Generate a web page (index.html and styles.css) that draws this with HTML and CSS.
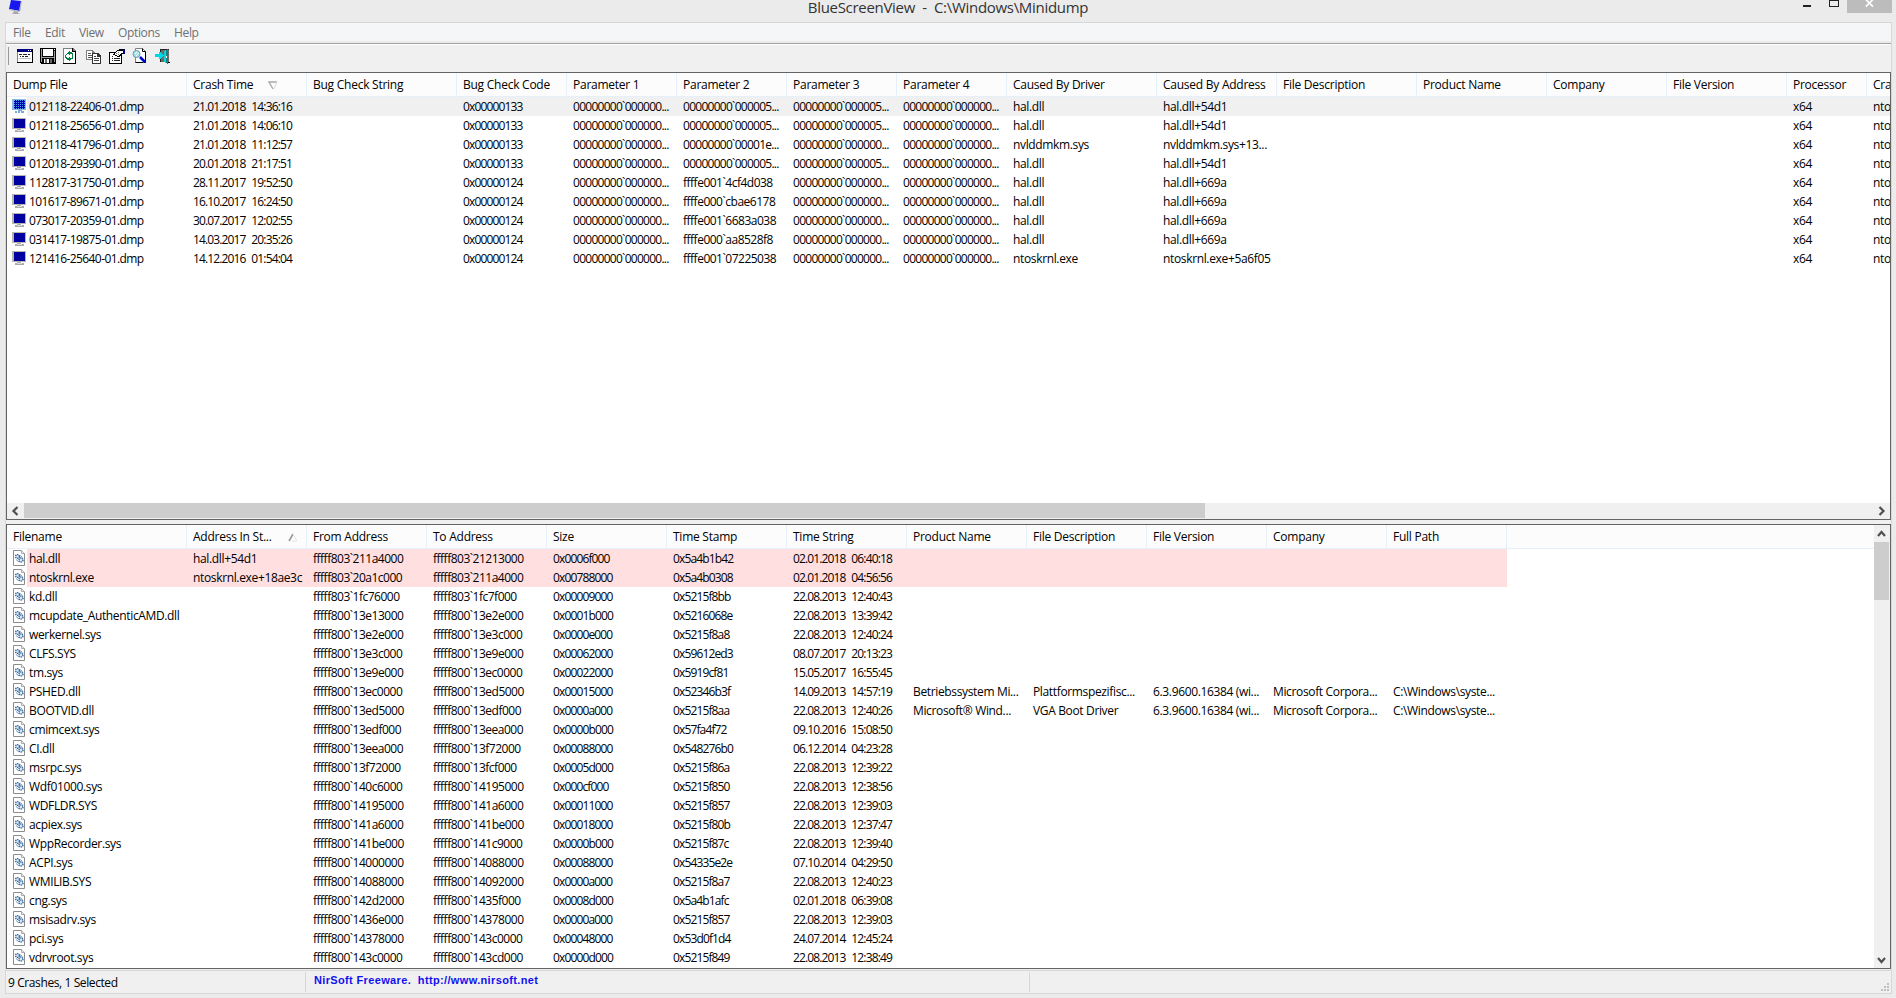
FILE: index.html
```
<!DOCTYPE html>
<html lang="en">
<head>
    <meta charset="UTF-8">
    <meta name="viewport" content="width=device-width, initial-scale=1.0">
    <title>BlueScreenView</title>
    <link rel="stylesheet" href="styles.css">
</head>
<body>
    <!-- shared row icons -->
    <svg class="defs" width="0" height="0">
        <pattern id="dots" width="2" height="2" patternUnits="userSpaceOnUse">
            <rect width="2" height="2" fill="#0000b4"/>
            <rect width="1" height="1" fill="#4b9be8"/>
        </pattern>
        <symbol id="monitor" viewBox="0 0 16 16">
            <path d="M0 1h14v11H0z" fill="#b9b5ad"/>
            <path d="M2 2h11v9H2z" fill="#0000a0"/>
            <path d="M5 12h4v1H5zM3 13h9v2H3z" fill="#aaa"/>
            <path d="M5 13h5v1H5z" fill="#ddd"/>
        </symbol>
        <symbol id="monitor-selected" viewBox="0 0 16 16">
            <path d="M0 1h14v11H0z" fill="#8db9dc"/>
            <path d="M2 2h11v9H2z" fill="url(#dots)"/>
            <path d="M6 12h4v1H6zM3 13h2v2H3zM6 13h2v2H6zM9 13h3v2H9z" fill="#7ba9d0"/>
        </symbol>
        <symbol id="module" viewBox="0 0 16 16">
            <path d="M1.500.5h8l3 3v12h-11z" fill="#fff" stroke="#8c8c8c"/>
            <path d="M9.500.5v3h3" fill="#eee" stroke="#aaa"/>
            <circle cx="5.500" cy="6.500" r="1.900" fill="#dce9f5" stroke="#34689c" stroke-width="1.400" stroke-dasharray="1.300 .6"/>
            <circle cx="9" cy="10" r="2" fill="#dce9f5" stroke="#34689c" stroke-width="1.400" stroke-dasharray="1.300 .6"/>
            <path d="M4 9.500l3 2.500M8 5.500l2.500 2" stroke="#6f96bd"/>
        </symbol>
    </svg>

    <div class="titlebar">
        <svg class="app-icon" width="16" height="15" viewBox="0 0 16 15">
            <path d="M3 0l10 1-1 10L1 9z" fill="#1717ee"/>
            <path d="M13 1l1 1-2 9-1-1z" fill="#b8b8c4"/>
            <path d="M1 9l11 2-1 1L1 10z" fill="#b5b5bd"/>
            <path d="M6 11l4 1v1l2 1H4l1-1z" fill="#aaa"/>
        </svg>
        <span class="title">BlueScreenView&nbsp; -&nbsp; C:\Windows\Minidump</span>
        <div class="window-buttons">
            <svg width="60" height="13" viewBox="0 0 60 13" shape-rendering="crispEdges">
                <path d="M16 5h8v2h-8z" fill="#222"/>
                <path d="M42 0h1v7h-1zM51 0h1v7h-1zM42 6h10v1H42zM42 0h10v1H42z" fill="#222"/>
            </svg>
            <div class="close">
                <svg width="9" height="9" viewBox="0 0 9 9"><path d="M.8-.5l7.200 7.200M8-.5L.8 6.700" stroke="#fff" stroke-width="1.700"/></svg>
            </div>
        </div>
    </div>

    <div class="window">
        <div class="menu">
            <span class="m-file">File</span>
            <span class="m-edit">Edit</span>
            <span class="m-view">View</span>
            <span class="m-options">Options</span>
            <span class="m-help">Help</span>
        </div>

        <div class="toolbar">
            <span class="grip"></span>
            <svg width="16" height="16" viewBox="0 0 16 16" shape-rendering="crispEdges">
                <path d="M0 1h16v14H0z" fill="#808080"/>
                <path d="M1 4h14v10H1z" fill="#fff"/>
                <path d="M0 1h15v3H0z" fill="#000080"/>
                <path d="M11 2h1v1h-1zM13 2h1v1h-1z" fill="#fff"/>
                <path d="M15 1h1v14h-1zM0 14h16v1H0z" fill="#000"/>
                <path d="M2 6h3v1H2zM6 6h4v1H6zM11 6h2v1h-2zM3 8h1v1H3zM5 8h2v1H5zM8 8h3v1H8z" fill="#222"/>
                <path d="M2 10h12v1H2z" fill="#c0c0c0"/>
            </svg>
            <svg width="16" height="16" viewBox="0 0 16 16" shape-rendering="crispEdges">
                <path d="M0 0h16v16H1v-1H0z" fill="#000"/>
                <path d="M3 0h10v8H3z" fill="#fff"/>
                <path d="M3 0h10v1H3z" fill="#000"/>
                <path d="M1 1h1v13H1zM14 3h1v11h-1zM2 9h12v1H2z" fill="#a0a0a0"/>
                <path d="M14 1h1v1h-1zM4 11h5v4H4z" fill="#fff"/>
                <path d="M5 11h2v4H5zM10 11h2v4h-2z" fill="#666"/>
            </svg>
            <svg width="16" height="16" viewBox="0 0 16 16" shape-rendering="crispEdges">
                <path d="M0 0h10l3 3v13H0z" fill="#808080"/>
                <path d="M1 1h8v3h3v11H1z" fill="#fff"/>
                <path d="M9 0h1v3h3v13h-1V4H9zM0 15h13v1H0z" fill="#000"/>
                <path d="M6 3h1v1h2v1h1v3H9V6H7v1H6V6H5V4h1zM3 6h1v1H3v3H2V7h1zM4 5h2v1H4zM3 9h1v1h2V9h1v1h1v2H7v1H6v-1H4v-1H3zM9 8h1v3H8v-1h1z" fill="#008040"/>
            </svg>
            <svg width="16" height="16" viewBox="0 0 16 16" shape-rendering="crispEdges">
                <path d="M0 2h6l3 3v7H0z" fill="#808080"/>
                <path d="M1 3h5v2h2v6H1z" fill="#fff"/>
                <path d="M2 5h3v1H2zM2 7h5v1H2zM2 9h5v1H2z" fill="#555"/>
                <path d="M6 5h6l3 3v8H6z" fill="#333"/>
                <path d="M7 6h4v3h3v6H7z" fill="#fff"/>
                <path d="M8 8h2v1H8zM8 10h5v1H8zM8 12h5v1H8z" fill="#444"/>
            </svg>
            <svg width="16" height="16" viewBox="0 0 16 16" shape-rendering="crispEdges">
                <path d="M0 4h13v12H0z" fill="#000"/>
                <path d="M1 5h11v10H1z" fill="#fff"/>
                <path d="M3 10h1v1H3zM5 10h6v1H5zM3 12h1v1H3zM5 12h6v1H5zM3 8h1v1H3z" fill="#222"/>
                <path d="M4 6l4-4h2V1h6v5h-3l-3 3H8V8H6V7H4z" fill="#000"/>
                <path d="M5 6l4-3h5v2h-2l-3 3H8V7H6z" fill="#fff"/>
                <path d="M14 1h2v5h-2z" fill="#000080"/>
                <path d="M7 5h1v1H7zM9 4h1v1H9zM9 6h1v1H9z" fill="#777"/>
            </svg>
            <svg width="16" height="16" viewBox="0 0 16 16">
                <path d="M3.500.5h7l3 3v11h-10z" fill="#fff" stroke="#808080"/>
                <path d="M10.500.5v3h3v11h-10" fill="none" stroke="#000"/>
                <circle cx="4.500" cy="6" r="3.500" fill="#9de4ee" stroke="#7898a8"/>
                <path d="M3 6l2-2M4 8l3-3" stroke="#fff"/>
                <path d="M8 9l5 5" stroke="#0000c8" stroke-width="2.500"/>
                <path d="M7.500 10.500l4 4" stroke="#68a8ff"/>
            </svg>
            <svg width="16" height="16" viewBox="0 0 16 16" shape-rendering="crispEdges">
                <path d="M5 1h9v13H5z" fill="#6a6a6a"/>
                <path d="M5 1h1v4H5zM5 9h1v5H5zM5 1h9v1H5z" fill="#222"/>
                <path d="M9 3l4-2v15l-4-2z" fill="#008b8b"/>
                <path d="M9 3l2-1v13l-2-1z" fill="#20cccc"/>
                <path d="M11 8h1v2h-1z" fill="#fff"/>
                <path d="M0 6h4V4h1l4 3v1l-4 3H4V9H0z" fill="#00d8e8"/>
                <path d="M13 14h2v1h-2z" fill="#000"/>
            </svg>
        </div>

        <div class="list crashes">
            <div class="header" id="crashHeader"></div>
            <div class="rows" id="crashRows"></div>
            <div class="hscroll">
                <svg width="17" height="16" viewBox="0 0 17 16"><path d="M10.500 4L6.500 8l4 4" fill="none" stroke="#505050" stroke-width="2.200"/></svg>
                <div class="thumb"></div>
                <svg class="right" width="17" height="16" viewBox="0 0 17 16"><path d="M6.500 4l4 4-4 4" fill="none" stroke="#505050" stroke-width="2.200"/></svg>
            </div>
        </div>

        <div class="list drivers">
            <div class="table">
                <div class="header" id="driverHeader"></div>
                <div class="rows" id="driverRows"></div>
            </div>
            <div class="vscroll">
                <svg width="15" height="17" viewBox="0 0 15 17"><path d="M4 11l3.500-4L11 11" fill="none" stroke="#505050" stroke-width="2.200"/></svg>
                <div class="thumb"></div>
                <svg class="down" width="15" height="17" viewBox="0 0 15 17"><path d="M4 7l3.500 4L11 7" fill="none" stroke="#505050" stroke-width="2.200"/></svg>
            </div>
        </div>

        <div class="status">
            <div class="count">9 Crashes, 1 Selected</div>
            <div class="link">NirSoft Freeware.&nbsp; http://www.nirsoft.net</div>
            <div class="rest">
                <svg width="8" height="8" viewBox="0 0 8 8" fill="#bfbfbf" shape-rendering="crispEdges"><path d="M6 0h2v2H6zM3 3h2v2H3zM6 3h2v2H6zM0 6h2v2H0zM3 6h2v2H3zM6 6h2v2H6z"/></svg>
            </div>
        </div>
    </div>

    <script src="script.js"></script>
</body>
</html>
```
FILE: styles.css
```
* {
    margin: 0;
    padding: 0;
    box-sizing: border-box;
}

body {
    width: 1896px;
    height: 998px;
    overflow: hidden;
    background: #ebebeb;
    color: #000;
    font-family: "Open Sans", "Noto Sans", sans-serif;
    font-size: 12px;
    letter-spacing: -0.35px;
    white-space: nowrap;
}

svg {
    display: block;
    flex: none;
}

.defs {
    position: absolute;
}

.titlebar {
    display: flex;
    justify-content: space-between;
    height: 22px;
    padding: 0 4px 0 8px;
}

.app-icon {
    margin-right: 85px;
}

.title {
    font-size: 15px;
    line-height: 15px;
    letter-spacing: -0.3px;
    color: #333;
}

.window-buttons {
    display: flex;
}

.close {
    display: flex;
    justify-content: center;
    width: 45px;
    height: 13px;
    background: #bcbcbc;
}

.window {
    display: flex;
    flex-direction: column;
    height: 972px;
    margin: 0 4px 0 5px;
    border: 1px solid #d5d7d9;
    background: #f0f0f0;
}

.menu {
    display: flex;
    height: 20px;
    padding-left: 7px;
    background: #f5f6f7;
    border-bottom: 2px solid #e8eaec;
    color: #707070;
    line-height: 20px;
}

.m-file { width: 32px; }
.m-edit { width: 34px; }
.m-view { width: 39px; }
.m-options { width: 56px; }

.toolbar {
    display: flex;
    gap: 7px;
    height: 29px;
    padding: 3px 0 0 2px;
    border-top: 1px solid #a0a0a0;
    box-shadow: inset 0 1px #fff;
}

.toolbar svg {
    margin-top: 1px;
}

.grip {
    width: 1px;
    height: 18px;
    margin-right: 1px;
    background: #999;
}

.list {
    border: 1px solid #646464;
    background: #fff;
    overflow: hidden;
}

.crashes {
    display: flex;
    flex-direction: column;
    height: 448px;
    margin-bottom: 4px;
}

.drivers {
    display: flex;
    height: 445px;
}

.table {
    flex: 1;
    overflow: hidden;
}

.header {
    display: flex;
    height: 24px;
    background: #fcfcfc;
    border-bottom: 1px solid #e5f0fb;
    overflow: hidden;
}

.col {
    display: flex;
    flex: none;
    padding-left: 6px;
    border-right: 1px solid #e5f0fb;
    line-height: 24px;
    letter-spacing: -0.25px;
}

.sort {
    margin: 8px 0 0 15px;
}

.rows {
    flex: 1;
    overflow: hidden;
}

.row {
    display: flex;
    width: max-content;
    height: 19px;
}

.cell {
    display: flex;
    flex: none;
    padding-left: 6px;
    line-height: 19px;
    white-space: pre;
    overflow: hidden;
}

.cell.num {
    letter-spacing: -0.86px;
    word-spacing: 3.5px;
}

.cell.address {
    letter-spacing: -0.5px;
}

.cell.cut {
    letter-spacing: -0.73px;
}

.cell.first {
    padding-left: 5px;
}

.cell.dump {
    letter-spacing: -0.6px;
}

.icon {
    width: 16px;
    height: 16px;
    margin: 1px 1px 0 0;
}

.row.selected {
    background: linear-gradient(to right, #fff 20px, #f0f0f0 20px);
}

.row.in-stack {
    background: linear-gradient(to right, #fff 20px, #ffdfdf 20px);
}

.hscroll {
    display: flex;
    height: 16px;
    background: #f0f0f0;
}

.hscroll .thumb {
    width: 1181px;
    height: 15px;
    background: #cdcdcd;
}

.hscroll .right {
    margin-left: auto;
}

.vscroll {
    display: flex;
    flex-direction: column;
    width: 16px;
    background: #f0f0f0;
}

.vscroll .thumb {
    width: 15px;
    height: 58px;
    background: #cdcdcd;
}

.vscroll .down {
    margin-top: auto;
}

.status {
    display: flex;
    flex: 1;
    margin-top: 1px;
    border-top: 1px solid #d7d7d7;
}

.count,
.link {
    height: 20px;
    margin-top: 1px;
    border-right: 1px solid #d7d7d7;
}

.count {
    width: 300px;
    padding-left: 2px;
    line-height: 22px;
    letter-spacing: -0.4px;
}

.link {
    width: 724px;
    padding-left: 8px;
    font: bold 11px/17px "Liberation Sans", Arial, sans-serif;
    letter-spacing: 0.35px;
    color: #1010f0;
}

.rest {
    display: flex;
    flex: 1;
    justify-content: flex-end;
    align-items: flex-end;
    padding: 0 2px 2px 0;
}
```
FILE: script.js
```
const MONITOR = 'monitor';
const MODULE = 'module';

// name, width
const crashColumns = [
    ['Dump File', 180], ['Crash Time', 120], ['Bug Check String', 150], ['Bug Check Code', 110],
    ['Parameter 1', 110], ['Parameter 2', 110], ['Parameter 3', 110], ['Parameter 4', 110],
    ['Caused By Driver', 150], ['Caused By Address', 120], ['File Description', 140],
    ['Product Name', 130], ['Company', 120], ['File Version', 120], ['Processor', 80], ['Crash Address', 120]
];

const driverColumns = [
    ['Filename', 180], ['Address In St...', 120], ['From Address', 120], ['To Address', 120],
    ['Size', 120], ['Time Stamp', 120], ['Time String', 120], ['Product Name', 120],
    ['File Description', 120], ['File Version', 120], ['Company', 120], ['Full Path', 120]
];

const zero = '00000000`000000...';
const five = '00000000`000005...';

// dump, time, code, parameters 2-4, driver, address
const crashes = [
    ['012118-22406-01.dmp', '21.01.2018 14:36:16', '0x00000133', five, five, zero, 'hal.dll', 'hal.dll+54d1'],
    ['012118-25656-01.dmp', '21.01.2018 14:06:10', '0x00000133', five, five, zero, 'hal.dll', 'hal.dll+54d1'],
    ['012118-41796-01.dmp', '21.01.2018 11:12:57', '0x00000133', '00000000`00001e...', zero, zero, 'nvlddmkm.sys', 'nvlddmkm.sys+13...'],
    ['012018-29390-01.dmp', '20.01.2018 21:17:51', '0x00000133', five, five, zero, 'hal.dll', 'hal.dll+54d1'],
    ['112817-31750-01.dmp', '28.11.2017 19:52:50', '0x00000124', 'ffffe001`4cf4d038', zero, zero, 'hal.dll', 'hal.dll+669a'],
    ['101617-89671-01.dmp', '16.10.2017 16:24:50', '0x00000124', 'ffffe000`cbae6178', zero, zero, 'hal.dll', 'hal.dll+669a'],
    ['073017-20359-01.dmp', '30.07.2017 12:02:55', '0x00000124', 'ffffe001`6683a038', zero, zero, 'hal.dll', 'hal.dll+669a'],
    ['031417-19875-01.dmp', '14.03.2017 20:35:26', '0x00000124', 'ffffe000`aa8528f8', zero, zero, 'hal.dll', 'hal.dll+669a'],
    ['121416-25640-01.dmp', '14.12.2016 01:54:04', '0x00000124', 'ffffe001`07225038', zero, zero, 'ntoskrnl.exe', 'ntoskrnl.exe+5a6f05']
];

const drivers = [
    ['hal.dll', 'hal.dll+54d1', 'fffff803`211a4000', 'fffff803`21213000', '0x0006f000', '0x5a4b1b42', '02.01.2018 06:40:18'],
    ['ntoskrnl.exe', 'ntoskrnl.exe+18ae3c', 'fffff803`20a1c000', 'fffff803`211a4000', '0x00788000', '0x5a4b0308', '02.01.2018 04:56:56'],
    ['kd.dll', '', 'fffff803`1fc76000', 'fffff803`1fc7f000', '0x00009000', '0x5215f8bb', '22.08.2013 12:40:43'],
    ['mcupdate_AuthenticAMD.dll', '', 'fffff800`13e13000', 'fffff800`13e2e000', '0x0001b000', '0x5216068e', '22.08.2013 13:39:42'],
    ['werkernel.sys', '', 'fffff800`13e2e000', 'fffff800`13e3c000', '0x0000e000', '0x5215f8a8', '22.08.2013 12:40:24'],
    ['CLFS.SYS', '', 'fffff800`13e3c000', 'fffff800`13e9e000', '0x00062000', '0x59612ed3', '08.07.2017 20:13:23'],
    ['tm.sys', '', 'fffff800`13e9e000', 'fffff800`13ec0000', '0x00022000', '0x5919cf81', '15.05.2017 16:55:45'],
    ['PSHED.dll', '', 'fffff800`13ec0000', 'fffff800`13ed5000', '0x00015000', '0x52346b3f', '14.09.2013 14:57:19', 'Betriebssystem Mi...', 'Plattformspezifisc...', '6.3.9600.16384 (wi...', 'Microsoft Corpora...', 'C:\\Windows\\syste...'],
    ['BOOTVID.dll', '', 'fffff800`13ed5000', 'fffff800`13edf000', '0x0000a000', '0x5215f8aa', '22.08.2013 12:40:26', 'Microsoft® Wind...', 'VGA Boot Driver', '6.3.9600.16384 (wi...', 'Microsoft Corpora...', 'C:\\Windows\\syste...'],
    ['cmimcext.sys', '', 'fffff800`13edf000', 'fffff800`13eea000', '0x0000b000', '0x57fa4f72', '09.10.2016 15:08:50'],
    ['CI.dll', '', 'fffff800`13eea000', 'fffff800`13f72000', '0x00088000', '0x548276b0', '06.12.2014 04:23:28'],
    ['msrpc.sys', '', 'fffff800`13f72000', 'fffff800`13fcf000', '0x0005d000', '0x5215f86a', '22.08.2013 12:39:22'],
    ['Wdf01000.sys', '', 'fffff800`140c6000', 'fffff800`14195000', '0x000cf000', '0x5215f850', '22.08.2013 12:38:56'],
    ['WDFLDR.SYS', '', 'fffff800`14195000', 'fffff800`141a6000', '0x00011000', '0x5215f857', '22.08.2013 12:39:03'],
    ['acpiex.sys', '', 'fffff800`141a6000', 'fffff800`141be000', '0x00018000', '0x5215f80b', '22.08.2013 12:37:47'],
    ['WppRecorder.sys', '', 'fffff800`141be000', 'fffff800`141c9000', '0x0000b000', '0x5215f87c', '22.08.2013 12:39:40'],
    ['ACPI.sys', '', 'fffff800`14000000', 'fffff800`14088000', '0x00088000', '0x54335e2e', '07.10.2014 04:29:50'],
    ['WMILIB.SYS', '', 'fffff800`14088000', 'fffff800`14092000', '0x0000a000', '0x5215f8a7', '22.08.2013 12:40:23'],
    ['cng.sys', '', 'fffff800`142d2000', 'fffff800`1435f000', '0x0008d000', '0x5a4b1afc', '02.01.2018 06:39:08'],
    ['msisadrv.sys', '', 'fffff800`1436e000', 'fffff800`14378000', '0x0000a000', '0x5215f857', '22.08.2013 12:39:03'],
    ['pci.sys', '', 'fffff800`14378000', 'fffff800`143c0000', '0x00048000', '0x53d0f1d4', '24.07.2014 12:45:24'],
    ['vdrvroot.sys', '', 'fffff800`143c0000', 'fffff800`143cd000', '0x0000d000', '0x5215f849', '22.08.2013 12:38:49']
];

const sortDown = '<svg class="sort" width="10" height="9" viewBox="0 0 10 9"><path d="M9 1H1l4 7" fill="none" stroke="#aaa" stroke-width="1.4"/><path d="M9 1L6 8" stroke="#ddd"/></svg>';
const sortUp = '<svg class="sort" width="12" height="9" viewBox="0 0 12 9"><path d="M2 8l4-7" stroke="#999" stroke-width="1.6"/><path d="M6 1l4 7H5" fill="none" stroke="#e4e4e4"/></svg>';

// digits, full addresses and shortened addresses are spaced differently
function spacingClass(value) {
    if (value.endsWith('.dmp')) return 'dump';
    if (/^ffff/.test(value)) return 'num address';
    if (/^0{8}`/.test(value)) return 'num cut';
    if (/^[0-9][0-9a-fx.: ]+$/.test(value)) return 'num';
    return '';
}

function renderHeader(id, columns, sortIcon) {
    document.getElementById(id).innerHTML = columns
        .map(([name, width], i) => `<div class="col" style="width:${width}px">${name}${i === 1 ? sortIcon : ''}</div>`)
        .join('');
}

function renderRow(values, columns, icon, className) {
    const cells = columns.map(([name, width], i) => {
        const value = values[i] || '';
        const image = i === 0 ? `<svg class="icon"><use href="#${icon}"/></svg>` : '';
        return `<div class="cell ${i === 0 ? 'first' : ''} ${spacingClass(value)}" style="width:${width}px">${image}${value}</div>`;
    });
    return `<div class="row ${className}">${cells.join('')}</div>`;
}

renderHeader('crashHeader', crashColumns, sortDown);
renderHeader('driverHeader', driverColumns, sortUp);

document.getElementById('crashRows').innerHTML = crashes.map((c, i) => {
    const [dump, time, code, p2, p3, p4, driver, address] = c;
    const values = [dump, time, '', code, zero, p2, p3, p4, driver, address, '', '', '', '', 'x64', 'ntoskrnl.exe'];
    return renderRow(values, crashColumns, i === 0 ? MONITOR + '-selected' : MONITOR, i === 0 ? 'selected' : '');
}).join('');

document.getElementById('driverRows').innerHTML = drivers
    .map((d, i) => renderRow(d, driverColumns, MODULE, i < 2 ? 'in-stack' : ''))
    .join('');
```
